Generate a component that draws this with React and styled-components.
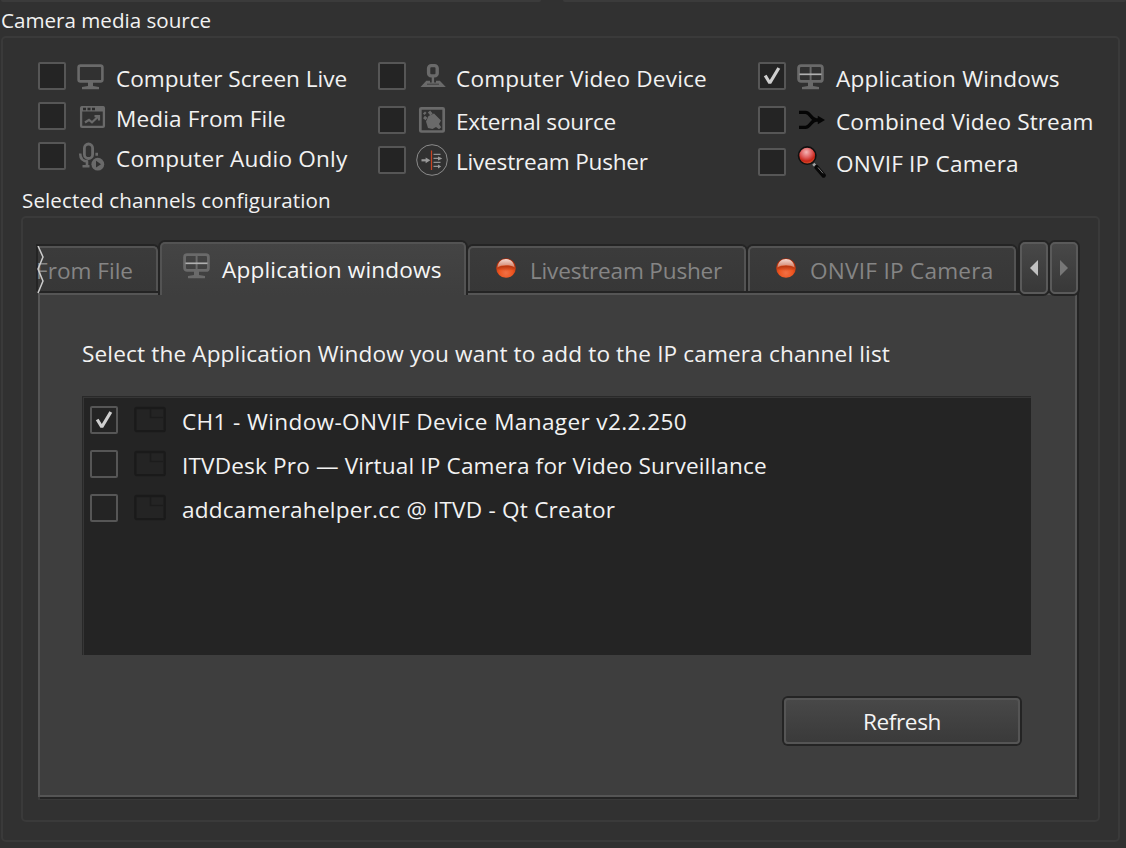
import React from "react";
import styled, { createGlobalStyle, css } from "styled-components";

const Global = createGlobalStyle`
  *, *::before, *::after { box-sizing: border-box; }
  html, body { margin: 0; background: #313131; }
  body { font-family: "Open Sans", "Noto Sans", sans-serif; color: #f2f2f2; overflow: hidden; }
`;

const Window = styled.div`
  width: 1126px;
  height: 848px;
  padding: 0 6px 0 1px;
  overflow: hidden;
  background: #313131;
`;

const TopEdge = styled.div`
  display: flex;
  gap: 22px;
  height: 2px;
  margin-right: -6px;
  &::before, &::after { content: ""; background: #3b3b3b; border-radius: 0 0 3px 3px; }
  &::before { width: 540px; }
  &::after { flex: 1; }
`;

const Text = styled.span`
  display: block;
  white-space: pre;
  font-size: ${(p) => p.$size || 22.6}px;
  line-height: 32px;
  letter-spacing: ${(p) => p.$ls || 0}px;
`;

const GroupTitle = styled.div`
  height: ${(p) => p.$h}px;
  padding: ${(p) => p.$top}px 0 0 ${(p) => p.$left || 0}px;
`;

const Group = styled.section`
  border: 2px solid #3a3a3a;
  border-radius: 5px;
`;

const MediaGroup = styled(Group)`
  height: 806px;
  padding: 22px 18px 0;
`;

const Sources = styled.div`
  display: grid;
  grid-template-columns: 340px 380px 1fr;
  height: 123px;
  padding-left: 17px;
`;

const Column = styled.div`
  display: flex;
  flex-direction: column;
`;

const Box = styled.span`
  display: block;
  flex: none;
  width: 28px;
  height: 28px;
  border: 2px solid #565656;
  border-radius: 2px;
  background: #242424;
  & svg { display: block; }
`;

const Source = styled.label`
  display: flex;
  align-items: center;
  height: 32px;
  margin-bottom: ${(p) => p.$after}px;
  & > svg { margin: 0 8px 0 10px; flex: none; }
  & > ${Text} { padding-top: ${(p) => p.$drop}px; }
`;

const ConfigGroup = styled(Group)`
  width: 1079px;
  height: 606px;
  padding: 22px 18px 0 15px;
`;

const TabBar = styled.div`
  position: relative;
  z-index: 1;
  display: flex;
  align-items: flex-end;
  height: 56px;
  margin-bottom: -3px;
`;

const Tab = styled.div`
  display: flex;
  align-items: center;
  width: ${(p) => p.$w}px;
  height: 45px;
  margin: 0 2px 5px 0;
  padding-left: ${(p) => p.$pad}px;
  border: 2px solid #535353;
  border-bottom: 0;
  border-radius: 5px 5px 0 0;
  background: linear-gradient(#3b3b3b, #373737);
  box-shadow: 0 0 0 2px #242424;
  clip-path: inset(-2px -2px 0 -2px);
  color: #858585;
  & > svg { flex: none; margin: 0 ${(p) => p.$gap || 0}px 4px 0; }
  & > span { padding-top: 3px; }
  ${(p) => p.$cut && css`
    border-left: 0;
    border-radius: 0 5px 0 0;
    & > span { margin-left: -2px; }
  `}
  ${(p) => p.$active && css`
    height: 53px;
    margin-bottom: 1px;
    background: linear-gradient(#444, #3e3e3e);
    color: #f6f6f6;
    & > span { padding-top: 1px; }
    & > svg { margin-bottom: 9px; }
  `}
`;

const Tear = styled.svg`
  position: absolute;
  left: -1px;
  top: 6px;
`;

const Arrow = styled.button`
  display: flex;
  align-items: center;
  justify-content: center;
  width: 28px;
  height: 52px;
  margin: 0 0 2px ${(p) => p.$ml}px;
  padding: 0;
  border: 2px solid #5a5a5a;
  border-radius: 5px;
  background: linear-gradient(#484848, #383838);
  box-shadow: 0 0 0 2px #242424;
`;

const Panel = styled.div`
  width: 1039px;
  height: 504px;
  padding: 43px 0 0 42px;
  border: 2px solid #555;
  background: #3e3e3e;
  box-shadow: 0 -2px 0 #242424, 2px 0 0 #242424, 2px 2px 0 #242424, 0 3px 0 #393939;
`;

const List = styled.div`
  width: 949px;
  height: 259px;
  margin-top: 26px;
  padding: 7px;
  border: 1px solid #292929;
  border-right: 0;
  border-bottom: 0;
  background: #242424;
  box-shadow: inset 1px 1px 0 #363636;
`;

const Item = styled.div`
  display: flex;
  align-items: center;
  height: 32px;
  margin-bottom: 12px;
  & > svg { margin: 0 16px; flex: none; }
  & > ${Text} { padding-top: 3px; }
`;

const Refresh = styled.button`
  display: flex;
  align-items: center;
  justify-content: center;
  width: 236px;
  height: 46px;
  margin: 43px 0 0 702px;
  padding: 2px 0 0;
  border: 2px solid #555;
  border-radius: 4px;
  background: linear-gradient(#484848, #3a3a3a);
  box-shadow: 0 0 0 2px #242424;
  font-family: inherit;
  color: #f4f4f4;
`;

const G = "#6a6a6a";
const Icon = ({ children }) => (
  <svg width="32" height="32" viewBox="0 0 32 32" fill="none" stroke={G}>{children}</svg>
);

const Check = ({ on }) => (
  <Box>
    {on && (
      <svg width="24" height="24" viewBox="0 0 24 24" fill="none">
        <path d="M5.2 11.500 9.800 19 18.800 4" stroke="#cfcfcf" strokeWidth="3.2" strokeLinejoin="bevel" />
      </svg>
    )}
  </Box>
);

const Monitor = () => (
  <Icon>
    <rect x="2.6" y="5.6" width="23.8" height="15.8" rx="2" strokeWidth="2.6" />
    <path d="M12 22h5v4l6 1v2.2H6V27l6-1z" fill={G} stroke="none" />
  </Icon>
);
const Windows = () => (
  <Icon>
    <rect x="2.6" y="5.6" width="23.8" height="15.8" rx="2.5" strokeWidth="2.8" />
    <path d="M14.6 6v15" strokeWidth="2" />
    <path d="M3.5 14.3h22" stroke="#b0b0b0" strokeWidth="1.7" />
    <path d="M12 22h5v4l6 1v2.2H6V27l6-1z" fill={G} stroke="none" />
  </Icon>
);
const MediaFile = () => (
  <Icon>
    <rect x="5.1" y="7.1" width="22.8" height="19.8" rx="1" strokeWidth="2.3" />
    <path d="M5 9h23" strokeWidth="5" />
    <path d="M7 9h3m1.5 0h3m1.5 0h3" stroke="#2b2b2b" strokeWidth="2.6" />
    <path d="m9 22.5 4-2.7 3 2.5 6-5.5M18.5 16.2H23v4.4" strokeWidth="2.2" />
  </Icon>
);
const Audio = () => (
  <Icon>
    <rect x="8.4" y="4" width="8.2" height="14.5" rx="4.1" strokeWidth="2.8" />
    <path d="M4.2 13.5c0 5 2.4 8 8 8M20.7 12.8v3M11 21.5v4.2M6.5 26.3h7" strokeWidth="2.6" />
    <circle cx="21.8" cy="24.2" r="6.4" fill={G} stroke="none" />
    <path d="m20 20.8 5 3.4-5 3.4z" fill="#303030" stroke="none" />
  </Icon>
);
const Webcam = () => (
  <Icon>
    <rect x="12.6" y="5.600" width="8.600" height="10.300" rx="2.600" strokeWidth="3.4" />
    <path d="M16.9 17v6" strokeWidth="2.4" />
    <path d="M10.300 20.800H14v1.700h6v-1.700h3.800l6 6.300H4.500z" fill={G} stroke="none" />
    <path d="M11 24.2h12" stroke="#3d3d3d" strokeWidth="1" />
  </Icon>
);
const External = () => (
  <Icon>
    <rect x="4.3" y="4.3" width="23.4" height="23.2" rx="1" strokeWidth="2.7" />
    <path d="m8 8.500 1.500 1.500M13 7.500l2.500 3M8 13l2.500 2" strokeWidth="3" />
    <path d="M10 17.500 12.500 12 18 9.500l7 7-2 3.5 2.2 3.2-2.2 2-3-2.2-3.500 2-4.500-1z" fill={G} stroke="none" />
  </Icon>
);
const Pusher = () => (
  <Icon>
    <circle cx="16" cy="16" r="15.3" stroke="#8c8c8c" strokeWidth="1" />
    <path d="M5.5 16.3h5" stroke="#999" strokeWidth="2.200" />
    <path d="m9.6 13.4 4.8 2.9-4.800 2.900z" fill="#999" stroke="none" />
    <path d="M17.500 10.400h7M17.500 14.400h7M17.500 18.400h7M17.500 22.400h6" stroke="#929292" strokeWidth="1.3" />
    <path d="m22 12.400 4.300 2-4.300 2zm0 8 3.200 2-3.200 2z" fill="#999" stroke="none" />
    <path d="M15.500 6.500V26" stroke="#c84422" strokeWidth="1.200" />
  </Icon>
);
const Combined = () => (
  <Icon>
    <path d="M3 8.4h6.5C14.5 8.4 15 16 20.5 16h4M3 23.4h6.5C14.5 23.4 15 16 20.5 16" stroke="#050505" strokeWidth="3.3" />
    <path d="M21.8 11.8 29 16l-7.2 4.2z" fill="#050505" stroke="none" />
  </Icon>
);
const Magnifier = () => (
  <Icon>
    <defs>
      <radialGradient id="lens" cx=".45" cy=".3" r=".7">
        <stop offset="0" stopColor="#f5b5b5" />
        <stop offset=".45" stopColor="#df5d5d" />
        <stop offset=".75" stopColor="#c62416" />
        <stop offset="1" stopColor="#dc6035" />
      </radialGradient>
    </defs>
    <path d="m17.3 17.7 4 4.4" stroke="#a5a5a5" strokeWidth="2.8" />
    <path d="m20.5 21.2 7.1 8.3" stroke="#080808" strokeWidth="4.4" strokeLinecap="round" />
    <path d="m22 21.5 5 5.8" stroke="#777" strokeWidth="1" />
    <circle cx="11.2" cy="9.6" r="8.7" fill="url(#lens)" stroke="#101010" strokeWidth="1.6" />
  </Icon>
);
const Orb = () => (
  <svg width="20" height="20" viewBox="0 0 20 20">
    <defs>
      <radialGradient id="orb" cx=".5" cy=".75" r=".7">
        <stop offset="0" stopColor="#f07045" />
        <stop offset=".5" stopColor="#ed5520" />
        <stop offset="1" stopColor="#a92808" />
      </radialGradient>
      <linearGradient id="gloss" x2="0" y2="1">
        <stop offset="0" stopColor="#f5dcd4" />
        <stop offset="1" stopColor="#cf7c62" />
      </linearGradient>
      <linearGradient id="shade" x2="0" y2="1">
        <stop offset="0" stopColor="#b03410" />
        <stop offset="1" stopColor="#b03410" stopOpacity="0" />
      </linearGradient>
    </defs>
    <circle cx="10" cy="10" r="9.8" fill="url(#orb)" />
    <path d="M1 10c3.500-3.500 14.500-3.500 18 0-1 4-17 4-18 0z" fill="url(#shade)" />
    <path d="M1.500 9.500C1.800 4.300 5.500 1 10 1s8.200 3.300 8.500 8.500c-3.500-3-13.500-3-17 0z" fill="url(#gloss)" />
  </svg>
);
const WindowGlyph = () => (
  <Icon>
    <rect x="1.300" y="4" width="29.400" height="23.200" rx="1.500" stroke="#1a1a1a" strokeWidth="2.300" />
    <path d="M16.500 5v8.500H29" stroke="#1c1c1c" strokeWidth="1.600" />
  </Icon>
);

const columns = [
  [
    { icon: Monitor, label: "Computer Screen Live", after: 8, drop: 6 },
    { icon: MediaFile, label: "Media From File", after: 8, drop: 6, ls: 0.13 },
    { icon: Audio, label: "Computer Audio Only", after: 0, drop: 6, ls: 0.19 },
  ],
  [
    { icon: Webcam, label: "Computer Video Device", after: 12, drop: 6, ls: 0.19 },
    { icon: External, label: "External source", after: 8, drop: 4, ls: -0.22 },
    { icon: Pusher, label: "Livestream Pusher", after: 0, drop: 4, ls: -0.22 },
  ],
  [
    { icon: Windows, label: "Application Windows", after: 12, drop: 6, ls: 0.2, on: true },
    { icon: Combined, label: "Combined Video Stream", after: 10, drop: 4, ls: 0.1 },
    { icon: Magnifier, label: "ONVIF IP Camera", after: 0, drop: 4, ls: 0.2 },
  ],
];

const windows = [
  { label: "CH1 - Window-ONVIF Device Manager v2.2.250", on: true, ls: 0.36 },
  { label: "ITVDesk Pro — Virtual IP Camera for Video Surveillance", ls: 0.15 },
  { label: "addcamerahelper.cc @ ITVD - Qt Creator", ls: 0.21 },
];

export default function App() {
  return (
    <>
      <Global />
      <Window>
        <TopEdge />
        <GroupTitle $h={34} $top={2}><Text $size={20.6}>Camera media source</Text></GroupTitle>
        <MediaGroup>
          <Sources>
            {columns.map((rows, c) => (
              <Column key={c}>
                {rows.map(({ icon: Glyph, label, after, drop, on, ls }) => (
                  <Source key={label} $after={after} $drop={drop}>
                    <Check on={on} />
                    <Glyph />
                    <Text $ls={ls}>{label}</Text>
                  </Source>
                ))}
              </Column>
            ))}
          </Sources>
          <GroupTitle $h={33} $top={1} $left={1}>
            <Text $size={20.6} $ls={0.1}>Selected channels configuration</Text>
          </GroupTitle>
          <ConfigGroup>
            <TabBar>
              <Tab $w={120} $cut><Text>From File</Text></Tab>
              <Tab $w={306} $pad={20} $gap={8} $active><Windows /><Text $ls={0.16}>Application windows</Text></Tab>
              <Tab $w={278} $pad={26} $gap={14}><Orb /><Text $ls={-0.2}>Livestream Pusher</Text></Tab>
              <Tab $w={268} $pad={26} $gap={14}><Orb /><Text $ls={0.25}>ONVIF IP Camera</Text></Tab>
              <Arrow $ml={2}><svg width="10" height="16"><path d="M9 0v16L1 8z" fill="#c0c0c0" /></svg></Arrow>
              <Arrow $ml={2}><svg width="10" height="16"><path d="M1 0v16l8-8z" fill="#777" /></svg></Arrow>
              <Tear width="8" height="48" viewBox="0 0 8 48" fill="none">
                <path d="m1 0 5 11-5 12 5 12-5 12" stroke="#ccc" strokeWidth="1.5" />
              </Tear>
            </TabBar>
            <Panel>
              <Text $ls={0.14}>Select the Application Window you want to add to the IP camera channel list</Text>
              <List>
                {windows.map(({ label, on, ls }) => (
                  <Item key={label}>
                    <Check on={on} />
                    <WindowGlyph />
                    <Text $ls={ls}>{label}</Text>
                  </Item>
                ))}
              </List>
              <Refresh><Text $ls={-0.4}>Refresh</Text></Refresh>
            </Panel>
          </ConfigGroup>
        </MediaGroup>
      </Window>
    </>
  );
}
